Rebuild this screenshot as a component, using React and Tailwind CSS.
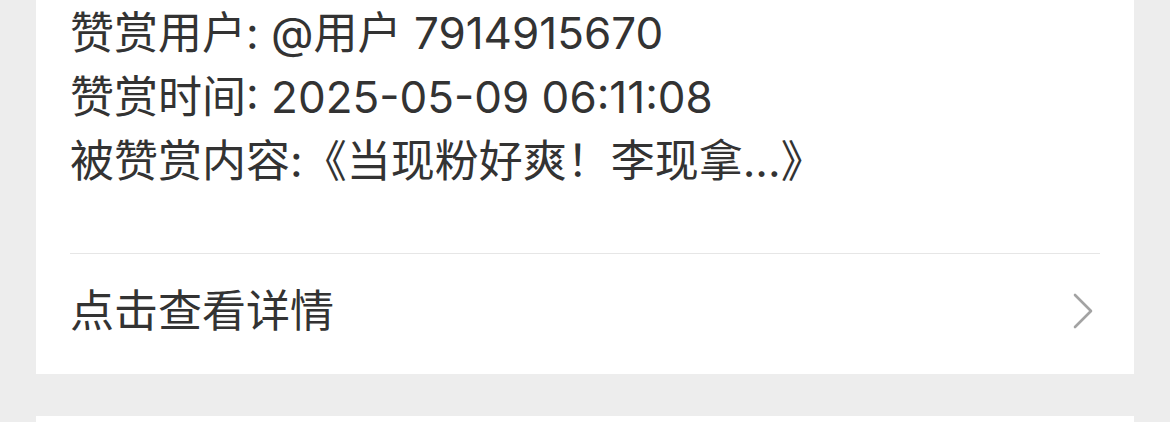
export default function App() {
  const lines = [
    '赞赏用户: @用户 7914915670',
    '赞赏时间: 2025-05-09 06:11:08',
    '被赞赏内容:《当现粉好爽！李现拿...》',
  ];

  return (
    <div
      className="w-[1170px] h-[422px] overflow-hidden bg-[#ededed] px-[36px]"
      style={{ fontFamily: 'Inter, "Noto Sans CJK SC", sans-serif' }}
    >
      <div className="bg-white">
        <div className="px-[34px] pt-[1px] pb-[60px]">
          {lines.map((line, i) => (
            <p key={i} className="text-[44px] leading-[64px] text-[#333333] whitespace-nowrap">
              {line}
            </p>
          ))}
        </div>
        <div className="mx-[34px] border-t border-[#e6e6e6]" />
        <div className="flex items-center justify-between h-[120px] pb-[7px] pl-[34px] pr-[40px]">
          <span className="text-[44px] text-[#333333]">点击查看详情</span>
          <svg width="22" height="36" viewBox="0 0 22 36" fill="none">
            <path d="M3 2 L19 18 L3 34" stroke="#a3a3a3" strokeWidth="2.6" strokeLinecap="round" strokeLinejoin="round" />
          </svg>
        </div>
      </div>
      <div className="mt-[42px] bg-white h-[40px]" />
    </div>
  );
}
